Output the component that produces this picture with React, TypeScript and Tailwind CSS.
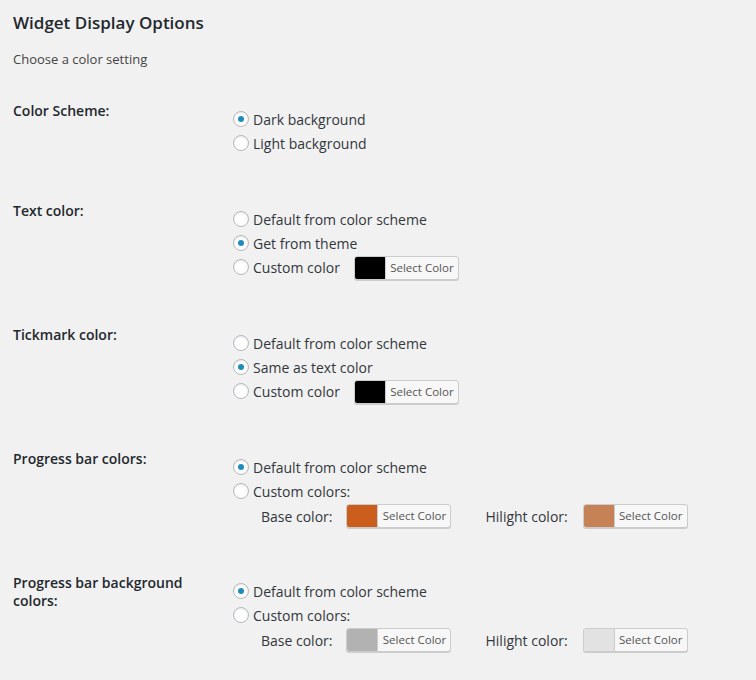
import { useState } from 'react';

/**
 * Widget Display Options — WordPress-style settings form.
 * Label column on the left, radio groups on the right; some groups
 * carry color pickers ("Select Color" buttons with a swatch).
 */

type Opt = { value: string; label: string; color?: string };

interface PickerProps {
  color: string;
}

function ColorButton({ color }: PickerProps) {
  return (
    <button
      type="button"
      className="flex h-[24px] w-[105px] items-stretch overflow-hidden rounded-[3px] border border-[#cccccc] bg-[#f7f7f7] shadow-[0_1px_0_#cccccc] text-[11.5px] text-[#555555]"
    >
      <span className="w-[31px] shrink-0 border-r border-[#cccccc]" style={{ background: color }} />
      <span className="flex flex-1 items-center justify-center">Select Color</span>
    </button>
  );
}

function Radio({ checked, onClick }: { checked: boolean; onClick: () => void }) {
  return (
    <span
      onClick={onClick}
      className="mr-[4px] flex h-[16px] w-[16px] shrink-0 items-center justify-center rounded-full border border-[#b4b9be] bg-white shadow-[inset_0_1px_2px_rgba(0,0,0,0.1)]"
    >
      {checked && <span className="h-[6px] w-[6px] rounded-full bg-[#1e8cbe]" />}
    </span>
  );
}

interface RowProps {
  title: React.ReactNode;
  options: Opt[];
  initial: string;
  pair?: [string, string];
  last?: boolean;
}

function SettingRow({ title, options, initial, pair }: RowProps) {
  const [value, setValue] = useState(initial);
  return (
    <div className="flex items-start">
      <div className="w-[220px] shrink-0 pt-[1px] text-[14px] font-semibold leading-[18px] text-[#23282d]">{title}</div>
      <div className={pair ? 'pt-[6px] pb-[44px]' : 'pt-[6px] pb-[46px]'}>
        {options.map((o) => (
          <label key={o.value} className="flex h-[24px] items-center text-[14px] text-[#32373c]">
            <Radio checked={value === o.value} onClick={() => setValue(o.value)} />
            <span>{o.label}</span>
            {o.color && (
              <span className="ml-[14px] pt-[2px]">
                <ColorButton color={o.color} />
              </span>
            )}
          </label>
        ))}
        {pair && (
          <div className="flex h-[26px] items-center pl-[28px] text-[14px] text-[#32373c]">
            <span className="mr-[14px]">Base color:</span>
            <ColorButton color={pair[0]} />
            <span className="ml-[34px] mr-[15px]">Hilight color:</span>
            <ColorButton color={pair[1]} />
          </div>
        )}
      </div>
    </div>
  );
}

export default function App() {
  return (
    <div
      className="min-h-[680px] bg-[#f1f1f1] px-[13px] pt-[11px]"
      style={{ fontFamily: '"Open Sans", "Liberation Sans", sans-serif' }}
    >
      <h2 className="text-[17px] font-semibold leading-[24px] text-[#23282d]">Widget Display Options</h2>
      <p className="mt-[14px] text-[13px] leading-[20px] text-[#444444]">Choose a color setting</p>

      <div className="mt-[32px]">
        <SettingRow
          title="Color Scheme:"
          initial="dark"
          options={[
            { value: 'dark', label: 'Dark background' },
            { value: 'light', label: 'Light background' },
          ]}
        />
        <SettingRow
          title="Text color:"
          initial="theme"
          options={[
            { value: 'default', label: 'Default from color scheme' },
            { value: 'theme', label: 'Get from theme' },
            { value: 'custom', label: 'Custom color', color: '#000000' },
          ]}
        />
        <SettingRow
          title="Tickmark color:"
          initial="text"
          options={[
            { value: 'default', label: 'Default from color scheme' },
            { value: 'text', label: 'Same as text color' },
            { value: 'custom', label: 'Custom color', color: '#000000' },
          ]}
        />
        <SettingRow
          title="Progress bar colors:"
          initial="default"
          options={[
            { value: 'default', label: 'Default from color scheme' },
            { value: 'custom', label: 'Custom colors:' },
          ]}
          pair={['#cc5e1d', '#c78157']}
        />
        <SettingRow
          title={
            <>
              Progress bar background
              <br />
              colors:
            </>
          }
          initial="default"
          options={[
            { value: 'default', label: 'Default from color scheme' },
            { value: 'custom', label: 'Custom colors:' },
          ]}
          pair={['#b2b2b2', '#e2e2e2']}
        />
      </div>
    </div>
  );
}
